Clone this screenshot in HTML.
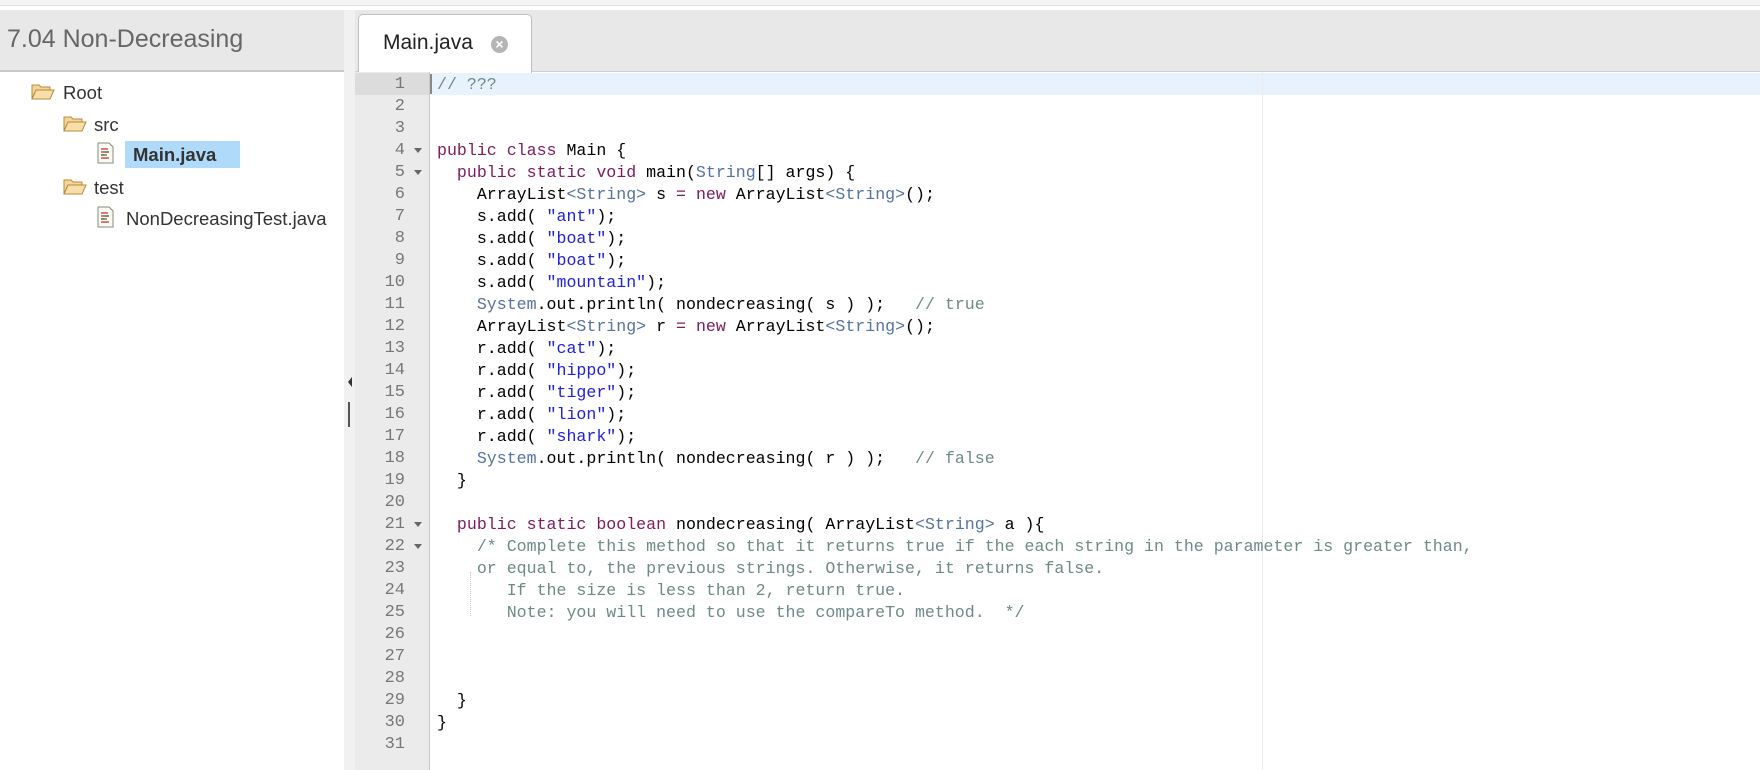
<!DOCTYPE html>
<html><head><meta charset="utf-8"><style>
body{margin:0;width:1760px;height:770px;overflow:hidden;background:#fff;font-family:"Liberation Sans",sans-serif;position:relative}
.abs{position:absolute}
#topline{left:0;top:0;width:1760px;height:5px;background:#f4f4f4;border-bottom:1px solid #e2e2e2}
#side{left:0;top:10px;width:344px;height:760px;background:#fff}
#stitle{left:0;top:10px;width:344px;height:62px;background:#e8e8e8;border-bottom:2px solid #c8c8c8;box-sizing:border-box}
#stitle span{position:absolute;left:7px;top:15px;font-size:25px;color:#666}
#split{left:344px;top:10px;width:11px;height:760px;background:#f1f1f1}
#ebar{left:355px;top:10px;width:1405px;height:62px;background:#e8e8e8;border-bottom:1px solid #d0d0d0;box-sizing:border-box}
#tab{left:358px;top:14px;width:174px;height:59px;background:#fff;border:1px solid #c0c0c0;border-bottom:none;border-radius:5px 5px 0 0;box-sizing:border-box}
#tab span{position:absolute;left:24px;top:16px;font-size:21px;color:#222}
#tab i{position:absolute;left:132px;top:21px;width:17px;height:17px;border-radius:50%;background:#b5b5b5;color:#fff;font-style:normal;font-size:14px;line-height:17px;text-align:center;font-weight:bold}
#gut{left:355px;top:72px;width:74px;height:698px;background:#ebebeb;border-right:1px solid #c9c9c9}
#act{left:355px;top:73px;width:74px;height:22px;background:#dcdcdc}
#hl{left:430px;top:73px;width:1330px;height:22px;background:#e8f2fd}
#margin{left:1262px;top:72px;width:1px;height:698px;background:#ececec}
.ln{position:absolute;left:355px;width:50px;text-align:right;font-family:"Liberation Mono",monospace;font-size:17px;color:#777;height:22px;line-height:23px}
.fold{position:absolute;left:414px;width:0;height:0;border-left:4px solid transparent;border-right:4px solid transparent;border-top:5px solid #666}
#code{left:437px;top:74px;font-family:"Liberation Mono",monospace;font-size:16.6px;line-height:22px;white-space:pre;color:#000}
.k{color:#7f1b5c}.t{color:#5672a0}.s{color:#2020e0}.c{color:#6e8a87}
.tree{position:absolute;font-size:18.5px;color:#333}
</style></head><body>
<div class="abs" id="topline"></div>
<div class="abs" id="side"></div>
<div class="abs" id="stitle"><span>7.04 Non-Decreasing</span></div>
<div class="abs" id="split"></div>
<div class="abs" style="left:348px;top:377px;width:0;height:0;border-top:5px solid transparent;border-bottom:5px solid transparent;border-right:4px solid #333"></div>
<div class="abs" style="left:348px;top:402px;width:2px;height:25px;background:#555"></div>
<div class="abs" id="ebar"></div>
<div class="abs" id="tab"><span>Main.java</span><i>×</i></div>

<svg class="abs" style="left:31px;top:82px" width="24" height="20" viewBox="0 0 24 20"><path d="M1 3h7l2 2h9v3H5L1 17z" fill="#f3d79a" stroke="#b9893a"/><path d="M1 17L5 8h18l-4 9z" fill="#f6dfa8" stroke="#b9893a"/></svg>
<div class="tree" style="left:63px;top:82px">Root</div>
<svg class="abs" style="left:63px;top:114px" width="24" height="20" viewBox="0 0 24 20"><path d="M1 3h7l2 2h9v3H5L1 17z" fill="#f3d79a" stroke="#b9893a"/><path d="M1 17L5 8h18l-4 9z" fill="#f6dfa8" stroke="#b9893a"/></svg>
<div class="tree" style="left:94px;top:114px">src</div>
<svg class="abs" style="left:97px;top:142px" width="17" height="22" viewBox="0 0 17 22"><path d="M1 1h11l4 4v16H1z" fill="#fbfbf5" stroke="#8a8a7a"/><path d="M4 7h7M4 10h8M4 13h6M4 16h8" stroke="#d0504a" stroke-width="1.5"/><path d="M8 10h4M4 13h3" stroke="#3a9a5a" stroke-width="1.5"/></svg>
<div class="abs" style="left:125px;top:141px;width:115px;height:27px;background:#b0dafa"></div>
<div class="tree" style="left:133px;top:144px;font-weight:bold;color:#333">Main.java</div>
<svg class="abs" style="left:63px;top:177px" width="24" height="20" viewBox="0 0 24 20"><path d="M1 3h7l2 2h9v3H5L1 17z" fill="#f3d79a" stroke="#b9893a"/><path d="M1 17L5 8h18l-4 9z" fill="#f6dfa8" stroke="#b9893a"/></svg>
<div class="tree" style="left:94px;top:177px">test</div>
<svg class="abs" style="left:97px;top:206px" width="17" height="22" viewBox="0 0 17 22"><path d="M1 1h11l4 4v16H1z" fill="#fbfbf5" stroke="#8a8a7a"/><path d="M4 7h7M4 10h8M4 13h6M4 16h8" stroke="#d0504a" stroke-width="1.5"/><path d="M8 10h4M4 13h3" stroke="#3a9a5a" stroke-width="1.5"/></svg>
<div class="tree" style="left:126px;top:208px">NonDecreasingTest.java</div>

<div class="abs" id="gut"></div>
<div class="abs" id="act"></div>
<div class="abs" id="hl"></div>
<div class="abs" id="margin"></div>
<div class="abs" style="left:430px;top:74px;width:2px;height:20px;background:#888"></div>
<div class="abs" style="left:470px;top:572px;width:0;height:44px;border-left:1px dotted #ccc"></div>

<div class="ln" style="top:73px">1</div><div class="ln" style="top:95px">2</div><div class="ln" style="top:117px">3</div><div class="ln" style="top:139px">4</div><div class="ln" style="top:161px">5</div><div class="ln" style="top:183px">6</div><div class="ln" style="top:205px">7</div><div class="ln" style="top:227px">8</div><div class="ln" style="top:249px">9</div><div class="ln" style="top:271px">10</div><div class="ln" style="top:293px">11</div><div class="ln" style="top:315px">12</div><div class="ln" style="top:337px">13</div><div class="ln" style="top:359px">14</div><div class="ln" style="top:381px">15</div><div class="ln" style="top:403px">16</div><div class="ln" style="top:425px">17</div><div class="ln" style="top:447px">18</div><div class="ln" style="top:469px">19</div><div class="ln" style="top:491px">20</div><div class="ln" style="top:513px">21</div><div class="ln" style="top:535px">22</div><div class="ln" style="top:557px">23</div><div class="ln" style="top:579px">24</div><div class="ln" style="top:601px">25</div><div class="ln" style="top:623px">26</div><div class="ln" style="top:645px">27</div><div class="ln" style="top:667px">28</div><div class="ln" style="top:689px">29</div><div class="ln" style="top:711px">30</div><div class="ln" style="top:733px">31</div>
<div class="fold" style="top:148px"></div><div class="fold" style="top:170px"></div><div class="fold" style="top:522px"></div><div class="fold" style="top:544px"></div>

<div class="abs" id="code"><span class="c">// ???</span>


<span class="k">public class</span> Main {
  <span class="k">public static void</span> main(<span class="t">String</span>[] args) {
    ArrayList<span class="t">&lt;String&gt;</span> s <span class="k">=</span> <span class="k">new</span> ArrayList<span class="t">&lt;String&gt;</span>();
    s.add( <span class="s">"ant"</span>);
    s.add( <span class="s">"boat"</span>);
    s.add( <span class="s">"boat"</span>);
    s.add( <span class="s">"mountain"</span>);
    <span class="t">System</span>.out.println( nondecreasing( s ) );   <span class="c">// true</span>
    ArrayList<span class="t">&lt;String&gt;</span> r <span class="k">=</span> <span class="k">new</span> ArrayList<span class="t">&lt;String&gt;</span>();
    r.add( <span class="s">"cat"</span>);
    r.add( <span class="s">"hippo"</span>);
    r.add( <span class="s">"tiger"</span>);
    r.add( <span class="s">"lion"</span>);
    r.add( <span class="s">"shark"</span>);
    <span class="t">System</span>.out.println( nondecreasing( r ) );   <span class="c">// false</span>
  }

  <span class="k">public static boolean</span> nondecreasing( ArrayList<span class="t">&lt;String&gt;</span> a ){
    <span class="c">/* Complete this method so that it returns true if the each string in the parameter is greater than,</span>
<span class="c">    or equal to, the previous strings. Otherwise, it returns false.</span>
<span class="c">       If the size is less than 2, return true.</span>
<span class="c">       Note: you will need to use the compareTo method.  */</span>



  }
}
</div>
</body></html>
